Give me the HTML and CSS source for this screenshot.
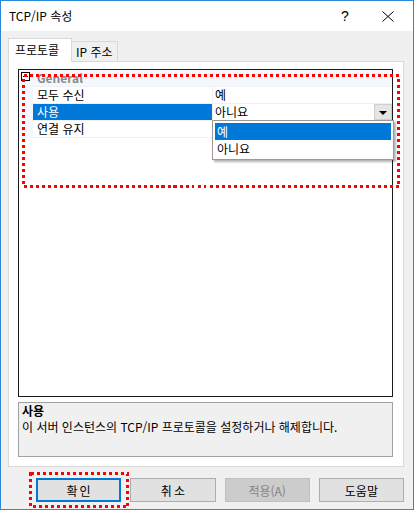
FILE: index.html
```html
<!DOCTYPE html>
<html lang="ko">
<head>
    <meta charset="UTF-8">
    <meta name="viewport" content="width=device-width, initial-scale=1.0">
    <title>TCP/IP 속성</title>
    <link rel="stylesheet" href="styles.css">
</head>
<body>
    <div id="window">
        <div id="titlebar">
            <span id="title">TCP/IP 속성</span>
            <span id="help">?</span>
            <svg id="close" width="14" height="11" viewBox="0 0 14 11">
                <path d="M1.5 0.5 L12.5 10.5 M12.5 0.5 L1.5 10.5" stroke="#000" stroke-width="1" fill="none"/>
            </svg>
        </div>

        <div id="content">
            <div id="tabs">
                <div class="tab active">프로토콜</div>
                <div class="tab">IP 주소</div>
            </div>

            <div id="panel">
                <div id="grid">
                    <div class="row cat">
                        <div class="gutter"><span class="expander"></span></div>
                        <div class="catName">General</div>
                    </div>
                    <div class="row">
                        <div class="gutter"></div>
                        <div class="name">모두 수신</div>
                        <div class="value">예</div>
                    </div>
                    <div class="row selected">
                        <div class="gutter"></div>
                        <div class="name">사용</div>
                        <div class="value">
                            <span>아니요</span>
                            <span class="dropBtn"></span>
                        </div>
                    </div>
                    <div class="row">
                        <div class="gutter"></div>
                        <div class="name">연결 유지</div>
                        <div class="value"></div>
                    </div>

                    <div id="dropList">
                        <div class="item on">예</div>
                        <div class="item">아니요</div>
                    </div>
                </div>

                <div id="desc">
                    <div class="descTitle">사용</div>
                    <div>이 서버 인스턴스의 TCP/IP 프로토콜을 설정하거나 해제합니다.</div>
                </div>
            </div>

            <div id="buttons">
                <div class="btn default wide">확인</div>
                <div class="btn wide">취소</div>
                <div class="btn disabled">적용(A)</div>
                <div class="btn">도움말</div>
            </div>
        </div>

        <!-- 빨간 점선 표시 -->
        <svg id="marks" width="414" height="510" viewBox="0 0 414 510">
            <rect x="23.5" y="75.5" width="375" height="111" />
            <rect x="30.5" y="473.5" width="97" height="33" />
        </svg>
    </div>
</body>
</html>
```

FILE: styles.css
```css
*{
    margin: 0;
    padding: 0;
    box-sizing: border-box;
}

body{
    font-family: "Noto Sans CJK KR", "Noto Sans", sans-serif;
    font-size: 12px;
    color: #000;
    background-color: #fff;
}

#window{
    position: relative;
    width: 414px;
    height: 510px;
    border: 1px solid #2b88d8;
    background-color: #f0f0f0;
}

#titlebar{
    height: 30px;
    background-color: white;
    display: flex;
    align-items: center;
    padding-left: 8px;
}

#title{
    flex: 1;
    font-size: 12px;
    line-height: 16px;
}

#help{
    width: 12px;
    text-align: center;
    font-family: "Liberation Sans", sans-serif;
    font-size: 14px;
    line-height: 16px;
    margin-right: 30px;
}

#close{
    display: block;
    margin-right: 18px;
}

#content{
    padding: 7px 9px 0 7px;
}

#tabs{
    display: flex;
    align-items: flex-end;
    height: 23px;
}

.tab{
    height: 20px;
    padding-left: 4px;
    padding-right: 4px;
    line-height: 19px;
    border: 1px solid #d9d9d9;
    border-bottom: none;
    border-left: none;
    background-color: #f0f0f0;
}

.tab.active{
    position: relative;
    z-index: 1;
    width: 64px;
    height: 24px;
    margin-bottom: -1px;
    padding-left: 6px;
    line-height: 22px;
    border-left: 1px solid #d9d9d9;
    background-color: white;
}

#panel{
    height: 406px;
    border: 1px solid #d9d9d9;
    background-color: white;
    padding: 7px 10px 0 9px;
}

#grid{
    position: relative;
    height: 328px;
    border: 1px solid #1a1a1a;
    background-color: white;
}

.row{
    display: flex;
    height: 17px;
    line-height: 16px;
}

.gutter{
    width: 14px;
    background-color: #f4f7fc;
    padding: 2px 0 0 2px;
}

.expander{
    display: block;
    position: relative;
    width: 9px;
    height: 9px;
    border: 1px solid #000;
    background-color: white;
}

.expander::after{
    content: "";
    position: absolute;
    left: 1px;
    top: 3px;
    width: 5px;
    height: 1px;
    background-color: #000;
}

.cat{
    background-color: #f4f7fc;
}

.catName{
    flex: 1;
    padding-left: 4px;
    color: #8a8a8a;
    font-weight: bold;
    border-bottom: 1px solid #eef1f6;
}

.name{
    width: 180px;
    padding-left: 4px;
    border-right: 1px solid #f0f0f0;
    border-bottom: 1px solid #f0f0f0;
}

.value{
    flex: 1;
    display: flex;
    padding-left: 2px;
    border-bottom: 1px solid #f0f0f0;
}

.selected .name{
    background-color: #0078d7;
    color: white;
}

.dropBtn{
    position: relative;
    margin-left: auto;
    width: 18px;
    height: 16px;
    background-color: #e5e5e5;
    border: 1px solid #cfcfcf;
}

.dropBtn::after{
    content: "";
    position: absolute;
    left: 4px;
    top: 6px;
    border-left: 4px solid transparent;
    border-right: 4px solid transparent;
    border-top: 4px solid #000;
}

#dropList{
    position: absolute;
    left: 193px;
    top: 50px;
    width: 182px;
    height: 40px;
    padding: 2px;
    border: 1px solid #9a9a9a;
    background-color: white;
    box-shadow: 2px 2px 2px rgba(0, 0, 0, 0.3);
}

.item{
    height: 17px;
    line-height: 17px;
    padding-left: 2px;
}

.item.on{
    background-color: #0078d7;
    color: white;
}

#desc{
    margin-top: 5px;
    height: 55px;
    border: 1px solid #a0a0a0;
    background-color: #f0f0f0;
    padding-left: 3px;
    line-height: 16px;
}

.descTitle{
    font-weight: bold;
}

#buttons{
    display: flex;
    gap: 9px;
    margin-top: 11px;
    padding-left: 28px;
}

.btn{
    width: 86px;
    height: 24px;
    display: flex;
    justify-content: center;
    align-items: center;
    background-color: #e1e1e1;
    border: 1px solid #adadad;
}

.btn.wide{
    letter-spacing: 2px;
    padding-left: 2px;
}

.btn.default{
    border: 2px solid #0078d7;
}

.btn.disabled{
    background-color: #cccccc;
    border-color: #bfbfbf;
    color: #838383;
}

#marks{
    position: absolute;
    left: -1px;
    top: -1px;
    pointer-events: none;
}

#marks rect{
    fill: none;
    stroke: #ff0000;
    stroke-width: 3;
    stroke-dasharray: 3 3;
    shape-rendering: crispEdges;
}
```
